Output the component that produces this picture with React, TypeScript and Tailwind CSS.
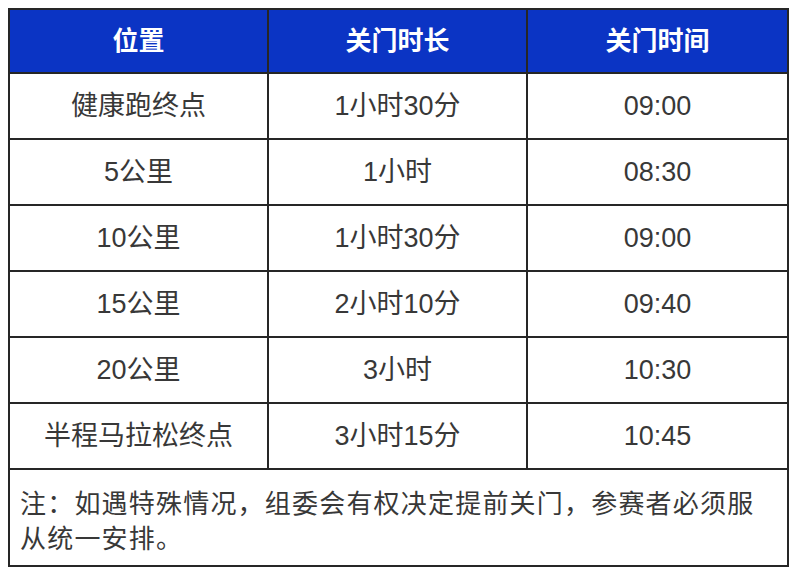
const rows = [
  { place: "健康跑终点", duration: "1小时30分", time: "09:00" },
  { place: "5公里", duration: "1小时", time: "08:30" },
  { place: "10公里", duration: "1小时30分", time: "09:00" },
  { place: "15公里", duration: "2小时10分", time: "09:40" },
  { place: "20公里", duration: "3小时", time: "10:30" },
  { place: "半程马拉松终点", duration: "3小时15分", time: "10:45" },
]

const font = { fontFamily: '"Liberation Sans", "Noto Sans CJK SC", sans-serif' }

export default function App() {
  return (
    <div className="bg-white w-[800px] h-[576px] p-2" style={font}>
      <div className="w-[781px] border-2 border-[#262626]">
        <div className="grid grid-cols-[257px_259px_261px] h-[62px] bg-[#0b34c4] text-white text-[26px] font-bold">
          <div className="flex items-center justify-center">位置</div>
          <div className="flex items-center justify-center border-l-2 border-[#262626]">关门时长</div>
          <div className="flex items-center justify-center border-l-2 border-[#262626]">关门时间</div>
        </div>
        {rows.map((r) => (
          <div
            key={r.place}
            className="grid grid-cols-[257px_259px_261px] h-[66px] border-t-2 border-[#262626] text-[27px] text-[#383838]"
          >
            <div className="flex items-center justify-center">{r.place}</div>
            <div className="flex items-center justify-center border-l-2 border-[#262626]">{r.duration}</div>
            <div className="flex items-center justify-center border-l-2 border-[#262626]">{r.time}</div>
          </div>
        ))}
        <div className="h-[97px] border-t-2 border-[#262626] pl-[10px] pt-[17px] text-[26px] leading-[35px] tracking-[1.2px] text-[#383838]">
          注：如遇特殊情况，组委会有权决定提前关门，参赛者必须服
          <br />
          从统一安排。
        </div>
      </div>
    </div>
  )
}
